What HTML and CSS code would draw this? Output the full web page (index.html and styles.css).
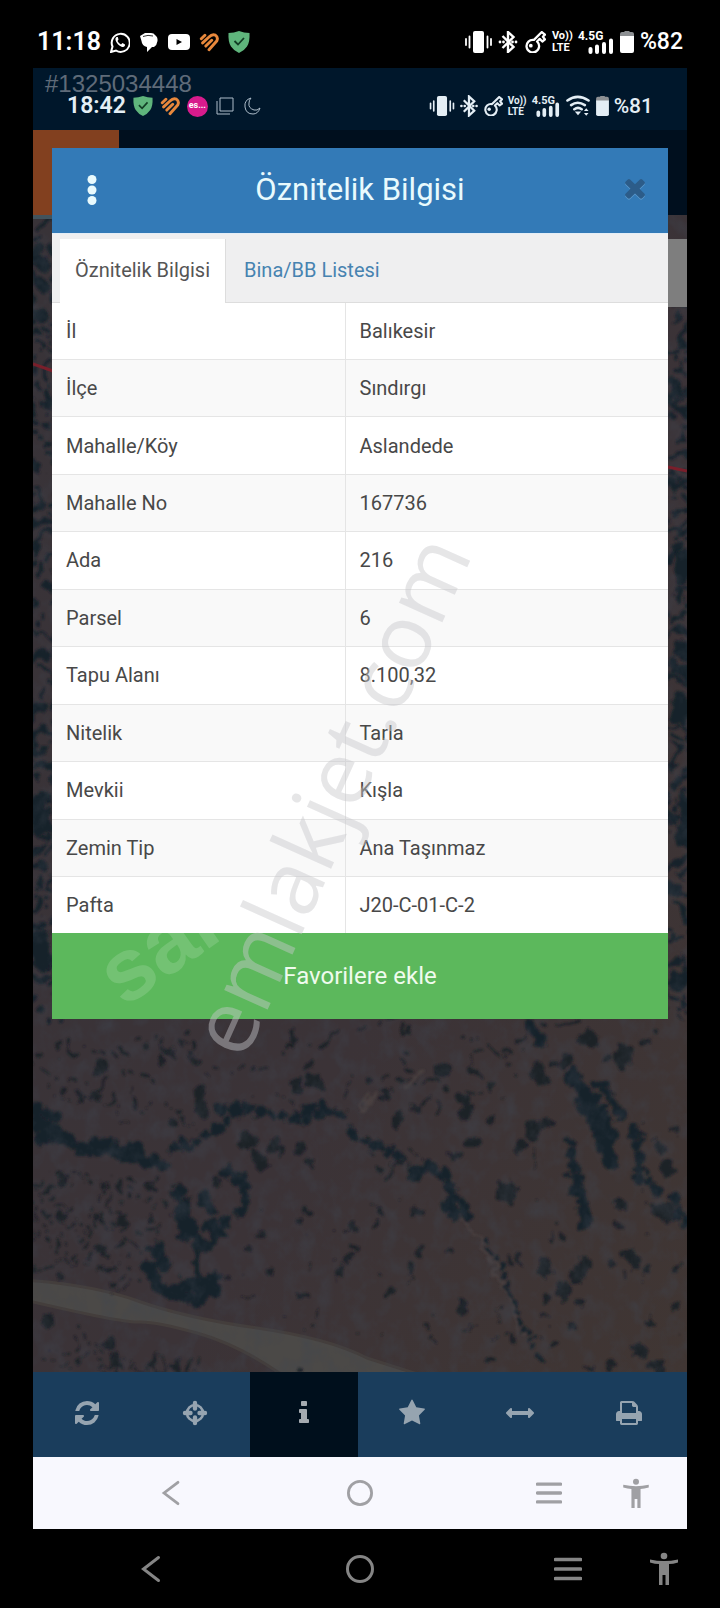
FILE: index.html
```html
<!DOCTYPE html>
<html lang="tr">
<head>
<meta charset="utf-8">
<meta name="viewport" content="width=device-width, initial-scale=1">
<title>Öznitelik Bilgisi</title>
<link rel="stylesheet" href="styles.css">
</head>
<body>
<svg class="defs" aria-hidden="true">
  <symbol id="shield" viewBox="0 0 22 22"><path fill="#5fb57c" d="M11 0 Q16 2 21.500 2 Q22 11 19 15.500 Q16 20 11 22 Q6 20 3 15.500 Q0 11 .5 2 Q6 2 11 0z"/><path d="m6.500 10 3.500 3.500 6-6.500" fill="none" stroke="#123d25" stroke-width="1.800"/></symbol>
  <symbol id="heart" viewBox="0 0 22 22"><path d="M2.500 7.500 6.500 3.500M4 12 11 5.500Q14.500 2 18 3.500 21.500 6 19.500 10L11 19.500M7.500 15.500 14 9" fill="none" stroke="#e8883c" stroke-width="3.200" stroke-linecap="round" stroke-linejoin="round"/></symbol>
  <symbol id="vibrate" viewBox="0 0 27 24"><rect x="8" y="1" width="11" height="22" rx="2"/><path d="M1 9v6M4.500 6.500v11M22.500 6.500v11M26 9v6" fill="none" stroke="currentColor" stroke-width="1.800" stroke-linecap="round"/></symbol>
  <symbol id="bluetooth" viewBox="0 1 19 22"><path d="m4 6 11 11-5.500 5V2L15 7 4 18" fill="none" stroke="currentColor" stroke-width="2.400"/><circle cx="1.500" cy="12" r="1.400"/><circle cx="5" cy="12" r="1.400"/><circle cx="14" cy="12" r="1.400"/><circle cx="17.500" cy="12" r="1.400"/></symbol>
  <symbol id="key" viewBox="1 2 21 21"><path d="M10.500 10.500 18 3l3 2.500-2 2 2 2.500-2.500 2-2.500-2.500-2.500 2.500a6 6 0 1 1-3-1.500z" fill="none" stroke="currentColor" stroke-width="2.200" stroke-linejoin="round"/><circle cx="7.500" cy="16" r="1.800"/></symbol>
  <symbol id="battery" viewBox="0 0 14 24"><path d="M2 2h2.500V1h5v1H12a2 2 0 0 1 2 2v3H0V4a2 2 0 0 1 2-2z" fill="#8d9093"/><path d="M0 6h14v15a2 2 0 0 1-2 2H2a2 2 0 0 1-2-2z"/></symbol>
  <symbol id="bars" viewBox="0 0 26 16"><path d="M2.500 11v3M9 8.500V14M16 6v8M23 2.500V14" fill="none" stroke="currentColor" stroke-width="4" stroke-linecap="round"/></symbol>
  <symbol id="back" viewBox="0 0 28 28"><path d="M21.500 2.500 6.500 14l15 11.500" fill="none" stroke="currentColor" stroke-width="3" stroke-linecap="round"/></symbol>
  <symbol id="home" viewBox="0 0 28 28"><circle cx="14" cy="14" r="12.500" fill="none" stroke="currentColor" stroke-width="3"/></symbol>
  <symbol id="menu" viewBox="0 0 28 28"><path d="M1.500 4.500h25M1.500 14h25M1.500 23.500h25" fill="none" stroke="currentColor" stroke-width="3.600" stroke-linecap="round"/></symbol>
  <symbol id="person" viewBox="0 0 28 34"><circle cx="14" cy="4" r="3.300"/><path d="M0 7.500Q14 10.500 28 7.500V10.500Q23 12 19 12V33h-3.500V23h-3V33H9V12Q5 12 0 10.500z"/></symbol>
</svg>

<div class="device">
  <header class="status status-outer">
    <div class="status-group">
      <time class="clock">11:18</time>
      <svg class="i20" viewBox="0 0 20 22" role="img" aria-label="WhatsApp"><path d="M1 21 2.500 15.500A9 9 0 1 1 6 19.500z" fill="none" stroke="currentColor" stroke-width="2"/><path d="M6.500 6Q5 7 5.500 9Q7 14 12 16Q14 16.500 15 14.500V13.500L12.500 12 11 13.500Q8.500 12 7.500 10L8.500 8.500 7.800 6z"/></svg>
      <svg class="i20" viewBox="0 0 20 22" role="img" aria-label="Mesajlar"><path d="M6 2h6q3 0 4 2 3 2 2.500 6T15 16h-2l-5 5v-5Q3 15 2.500 10L1 5z"/><path d="M4 5.500Q9 3.500 14 5" fill="none" stroke="#000" stroke-width=".8"/></svg>
      <svg class="i22" viewBox="0 0 22 22" role="img" aria-label="YouTube"><rect y="3" width="22" height="16" rx="4"/><path fill="#000" d="m8.500 8 5.500 3-5.500 3z"/></svg>
      <svg class="i20"><use href="#heart"/></svg>
      <svg class="i22"><use href="#shield"/></svg>
    </div>
    <div class="status-group status-right">
      <svg class="i27"><use href="#vibrate"/></svg>
      <svg class="i20"><use href="#bluetooth"/></svg>
      <svg class="i22"><use href="#key"/></svg>
      <span class="volte"><span>Vo))</span><span>LTE</span></span>
      <span class="signal"><span>4.5G</span><svg><use href="#bars"/></svg></span>
      <svg class="i14"><use href="#battery"/></svg>
      <span class="percent">%82</span>
    </div>
  </header>

  <main class="screen">
    <div class="status status-inner">
      <span class="listing">#1325034448</span>
      <div class="status-group">
        <time class="clock">18:42</time>
        <svg class="i20"><use href="#shield"/></svg>
        <svg class="i20"><use href="#heart"/></svg>
        <span class="pink">es...</span>
        <svg class="i20 thin" viewBox="0 0 20 20"><path d="M5 2h13v13H5zM2 5v13h13" /></svg>
        <svg class="i20 thin" viewBox="0 0 20 20"><path d="M9 2Q2 4 3 11t8 7q5 0 7-6-3 3-6 2-6-2-5-7 0-3 2-5z"/></svg>
      </div>
      <div class="status-group status-right">
        <svg class="i27"><use href="#vibrate"/></svg>
        <svg class="i18"><use href="#bluetooth"/></svg>
        <svg class="i20"><use href="#key"/></svg>
        <span class="volte"><span>Vo))</span><span>LTE</span></span>
        <span class="signal"><span>4.5G</span><svg><use href="#bars"/></svg></span>
        <svg class="i27" viewBox="0 0 27 24"><path d="M2 6Q13 -2 25 6M6 11q7-5 15 0M9.500 15.500q4-3 8 0" fill="none" stroke="currentColor" stroke-width="2.800" stroke-linecap="round"/><path d="m10 18h7l-3.500 4zM20 17.500l2.500-3 2.500 3zM20 19.500h5l-2.500 3z"/></svg>
        <svg class="i14"><use href="#battery"/></svg>
        <span class="percent">%81</span>
      </div>
    </div>

    <div class="app">
      <div class="appbar"><div class="brand"></div></div>
      <div class="map">
        <svg class="ground" viewBox="33 215 654 1157" preserveAspectRatio="xMidYMax slice" aria-hidden="true">
          <defs>
            <filter id="soil" x="0" y="0" width="100%" height="100%"><feTurbulence type="fractalNoise" baseFrequency=".06 .05" numOctaves="5" seed="4"/><feColorMatrix values="0 0 0 0 .05  0 0 0 0 .06  0 0 0 0 .08  1.600 1.200 0 0 -1.250"/></filter>
            <filter id="rough" x="-5%" y="-5%" width="110%" height="110%"><feTurbulence type="fractalNoise" baseFrequency=".07" numOctaves="4" seed="8"/><feDisplacementMap in="SourceGraphic" scale="18" xChannelSelector="R" yChannelSelector="G"/><feGaussianBlur stdDeviation=".8"/></filter>
            <filter id="scatter" x="-5%" y="-5%" width="110%" height="110%"><feTurbulence type="fractalNoise" baseFrequency=".03" numOctaves="3" seed="21"/><feDisplacementMap in="SourceGraphic" scale="70" xChannelSelector="R" yChannelSelector="G"/><feGaussianBlur stdDeviation=".8"/></filter>
            <linearGradient id="earth" x1="0" y1="0" x2="1" y2="1"><stop offset="0" stop-color="#383338"/><stop offset=".6" stop-color="#3b3337"/><stop offset="1" stop-color="#403633"/></linearGradient>
          </defs>
          <rect x="33" y="215" width="654" height="1157" fill="url(#earth)"/>
          <path fill="#4b4947" stroke="#443e3c" stroke-width="3" d="M20 1280 Q90 1284 138 1301T257 1328T367 1358L427 1377H285Q240 1345 197 1333T138 1322 20 1299z"/>
          <g filter="url(#scatter)" fill="none" stroke="#1e2228" stroke-linecap="round">
            <path stroke-width="7" stroke-dasharray="0 19" d="M35 1040q40 20 90 5t80 20 110-20 90 15 100-10 180-20M40 1065q60 30 120 10M36 1175q50 20 90 10t50 20M36 1205q50 20 120 10M36 1245q50 20 110 0"/>
            <path stroke-width="5" stroke-dasharray="0 13" d="M38 1085q30 20 80 20t90 10M36 1185q50 20 130 8M36 1215q40 20 120 10M36 1235q50 10 120 15M36 1262q60 0 100 12M60 1345q50 10 120 30M50 1365q50 0 160 5M460 1040q60 10 100 25M350 1135q40 30 70 32"/>
            <path stroke-width="4" stroke-dasharray="0 37" d="M240 1290q90-70 180 10t150-10 100 60M280 1320q120 30 220 0M260 1210q100 40 150-20M480 1070q80 80 60 180M210 1090q90 40 240-20M620 1100q60 60 20 180"/>
            <path stroke="#16212b" stroke-width="14" stroke-dasharray="0 27" d="M42 226v780M680 320v700"/>
            <path stroke="#16212b" stroke-width="8" stroke-dasharray="0 19" d="M34 240v780M56 230v780M672 320v700M690 320v700"/>
          </g>
          <g filter="url(#rough)" fill="none" stroke-linecap="round" stroke-linejoin="round">
            <path stroke="#494140" stroke-width="3" d="M360 1112l15-18M403 1090l20-15M455 1215l25 25 20 40 22 50"/>
            <g stroke="#1b2028">
              <path stroke-width="20" d="M545 1267h0M506 1190v4M622 1056v4M661 1212h4M588 1040h0"/>
              <path stroke-width="14" d="M200 1092v6M203 1110h0M314 1082h5M296 1088h0M463 1096v4M464 1112h0M443 1070h0M471 1143h0M521 1148h0M546 1123h0M533 1128v6M537 1070l5 8M298 1149h0M276 1147h0M260 1158v4M243 1140l9 4M100 1068h3M631 1256v3M583 1263v6M575 1275h0M562 1290h0M638 1352h0M657 1365h0M463 1306h0M620 1205h0M670 1168h0M659 1148h0M399 1119h0M567 1060h0M109 1343h0M117 1362h0M48 1320h0"/>
              <path stroke-width="8" d="M390 1292v3M340 1270v4M647 1270h0M379 1210h0M416 1212h0M310 1211h0M654 1033h0M652 1325h0M620 1225h0M295 1030v8M66 1087h0M80 1095h0M95 1098h0M132 1105h0M172 1122h0M192 1058h0M172 1052h0M160 1062h0M310 1065h0M369 1077h0M385 1095h0M418 1106h0M425 1100h0M491 1118h0M312 1165h0M455 1158h0M509 1262h0M520 1257h0M548 1299h0M581 1303h0M354 1230h0M376 1225h0M299 1219h0M260 1235h0M249 1250h0M270 1272h0M352 1248h0M420 1250h0M301 1295h0M410 1267h0M350 1260h0M561 1237h0M610 1262h0M676 1270h0M674 1307h0M555 1345h0M490 1361h0M592 1368h0M609 1366h0M674 1130h0M570 1325h0M512 1340h0M60 1215h0M95 1218h0M123 1216v6M150 1220h0M100 1251h0M60 1276h0M110 1268h0M150 1190h0M105 1185h0M62 1180h0M216 1183h0M450 1250h0M645 1043h0M605 1060h0M555 1063h0M175 1365h0M300 1369h0"/>
            </g>
            <g stroke="#18212a">
              <path stroke-width="14" stroke-dasharray="0 11" d="M36 1112l30 6M36 1124l30 10M40 1138h25l12 10 42 4 32 10M95 1145l50 6M155 1158l15 12"/>
              <path stroke-width="11" stroke-dasharray="0 12" d="M175 1150l20-10 20-12 20-14 22-4 25 8 55-6 12 12M222 1108h30M310 1108h22M355 1135l15 8 15 8 18 6M375 1145l10-6"/>
              <path stroke-width="14" stroke-dasharray="0 13" d="M226 1172l18 12 4 14-10 18M204 1198l14 18M180 1196l6 22 8 18 14 12 14-20 4-14M178 1212l15 32M210 1225l8 8"/>
              <path stroke-width="6" d="M196 1240v34"/>
              <path stroke-width="15" stroke-dasharray="0 12" d="M157 1250l8 18M148 1266l14 24 28 10 30-14M180 1288l36-10"/>
              <path stroke-width="13" stroke-dasharray="0 12" d="M415 1172l12-8 18 12 8 20 12 14 4 18M448 1205l8 16"/>
              <path stroke-width="6" stroke-dasharray="0 10" d="M486 1240l8 14 8 18 6 20 12 20 8 24 12 24M508 1292l10 24M598 1085l20 32"/>
              <path stroke-width="9" d="M530 1025l12 22"/>
              <path stroke-width="17" stroke-dasharray="0 13" d="M572 1078l8 16 16 30 8 22 8 16M586 1092l18 30 8 28M598 1120l12 36"/>
              <path stroke-width="12" stroke-dasharray="0 12" d="M600 1084l20 32M634 1132l6 28-2 20M570 1142l4 24 0 18 6 16 4 30M578 1180l10 44M676 1200l12 32M650 1180l6 12"/>
              <path stroke-width="16" d="M38 800l4 30M40 935l3 30M684 555v20M680 700v20M684 800l4 40"/>
            </g>
          </g>
          <rect x="33" y="215" width="654" height="1157" filter="url(#soil)" opacity=".45"/>
          <path d="M33 364l20 7M668 467l19 4" stroke="#791f2b" stroke-width="3"/>
          <path d="M33 215h20v4H33z" fill="#42535c"/>
        </svg>
        <div class="map-control"></div>
      </div>
      <nav class="toolbar" aria-label="Harita araçları">
        <button class="tool" aria-label="Yenile"><svg viewBox="0 0 1792 1792"><path d="M1639 1056q0 5-1 7-64 268-268 434.500t-478 166.500q-146 0-282.500-55t-243.500-157l-129 129q-19 19-45 19t-45-19-19-45v-448q0-26 19-45t45-19h448q26 0 45 19t19 45-19 45l-137 137q71 66 161 102t187 36q134 0 250-65t186-179q11-17 53-117 8-23 30-23h192q13 0 22.500 9.500t9.500 22.500zm25-800v448q0 26-19 45t-45 19h-448q-26 0-45-19t-19-45 19-45l138-138q-148-137-349-137-134 0-250 65t-186 179q-11 17-53 117-8 23-30 23h-199q-13 0-22.500-9.500t-9.500-22.500v-7q65-268 270-434.500t480-166.500q146 0 284 55.500t245 156.500l130-129q19-19 45-19t45 19 19 45z"/></svg></button>
        <button class="tool" aria-label="Konum"><svg viewBox="0 0 28 28"><circle cx="14" cy="14" r="8" fill="none" stroke="currentColor" stroke-width="2.600"/><path d="M14 4v5.500M14 18.500V24M4 14h5.500M18.500 14H24" stroke="currentColor" stroke-width="4.400" stroke-linecap="round"/></svg></button>
        <button class="tool tool-active" aria-label="Bilgi" aria-pressed="true"><svg viewBox="0 0 1792 1792"><path d="M1216 1344v128q0 26-19 45t-45 19h-512q-26 0-45-19t-19-45v-128q0-26 19-45t45-19h64v-384h-64q-26 0-45-19t-19-45v-128q0-26 19-45t45-19h384q26 0 45 19t19 45v576h64q26 0 45 19t19 45zm-128-1152v192q0 26-19 45t-45 19h-256q-26 0-45-19t-19-45v-192q0-26 19-45t45-19h256q26 0 45 19t19 45z"/></svg></button>
        <button class="tool" aria-label="Favoriler"><svg viewBox="0 0 1792 1792"><path d="M1728 647q0 22-26 48l-363 354 86 500q1 7 1 20 0 21-10.500 35.500t-30.500 14.500q-19 0-40-12l-449-236-449 236q-22 12-40 12-21 0-31.500-14.500t-10.500-35.500q0-6 2-20l86-500-364-354q-25-27-25-48 0-37 56-46l502-73 225-455q19-41 49-41t49 41l225 455 502 73q56 9 56 46z"/></svg></button>
        <button class="tool" aria-label="Ölçüm"><svg viewBox="0 0 1792 1792"><path d="M1792 896q0 26-19 45l-256 256q-19 19-45 19t-45-19-19-45v-128h-1024v128q0 26-19 45t-45 19-45-19l-256-256q-19-19-19-45t19-45l256-256q19-19 45-19t45 19 19 45v128h1024v-128q0-26 19-45t45-19 45 19l256 256q19 19 19 45z"/></svg></button>
        <button class="tool" aria-label="Yazdır"><svg viewBox="0 0 1792 1792"><path fill-rule="evenodd" d="M448 1536h896v-256h-896v256zm0-640h896v-384h-160q-40 0-68-28t-28-68v-160h-640v640zm1280 64v416q0 13-9.500 22.500t-22.500 9.500h-224v160q0 40-28 68t-68 28h-960q-40 0-68-28t-28-68v-160h-224q-13 0-22.500-9.500t-9.500-22.500v-416q0-79 56.500-135.500t135.500-56.500h64v-544q0-40 28-68t68-28h672q40 0 88 20t76 48l152 152q28 28 48 76t20 88v256h64q79 0 135.500 56.500t56.500 135.500z"/></svg></button>
      </nav>

      <section class="modal" role="dialog" aria-labelledby="modal-title">
        <div class="modal-head">
          <button class="head-btn" aria-label="Menü"><svg class="dots" viewBox="0 0 10 30"><circle cx="5" cy="4.500" r="4.500"/><circle cx="5" cy="15" r="4.500"/><circle cx="5" cy="25.500" r="4.500"/></svg></button>
          <h1 class="modal-title" id="modal-title">Öznitelik Bilgisi</h1>
          <button class="head-btn close" aria-label="Kapat"><svg viewBox="0 0 1792 1792"><path d="M1490 1190q0 40-28 68l-136 136q-28 28-68 28t-68-28l-294-294-294 294q-28 28-68 28t-68-28l-136-136q-28-28-28-68t28-68l294-294-294-294q-28-28-28-68t28-68l136-136q28-28 68-28t68 28l294 294 294-294q28-28 68-28t68 28l136 136q28 28 28 68t-28 68l-294 294 294 294q28 28 28 68z"/></svg></button>
        </div>
        <div class="tabs" role="tablist">
          <button class="tab tab-active" role="tab" aria-selected="true">Öznitelik Bilgisi</button>
          <button class="tab" role="tab" aria-selected="false">Bina/BB Listesi</button>
        </div>
        <table class="info">
          <tbody>
            <tr><th scope="row">İl</th><td>Balıkesir</td></tr>
            <tr><th scope="row">İlçe</th><td>Sındırgı</td></tr>
            <tr><th scope="row">Mahalle/Köy</th><td>Aslandede</td></tr>
            <tr><th scope="row">Mahalle No</th><td>167736</td></tr>
            <tr><th scope="row">Ada</th><td>216</td></tr>
            <tr><th scope="row">Parsel</th><td>6</td></tr>
            <tr><th scope="row">Tapu Alanı</th><td>8.100,32</td></tr>
            <tr><th scope="row">Nitelik</th><td>Tarla</td></tr>
            <tr><th scope="row">Mevkii</th><td>Kışla</td></tr>
            <tr><th scope="row">Zemin Tip</th><td>Ana Taşınmaz</td></tr>
            <tr><th scope="row">Pafta</th><td>J20-C-01-C-2</td></tr>
          </tbody>
        </table>
        <button class="favorite">Favorilere ekle</button>
      </section>
      <svg class="watermark" viewBox="33 130 654 1327" preserveAspectRatio="xMidYMin meet">
        <text class="mark-small" transform="translate(124 1008) rotate(-35)">sah</text>
        <text class="mark-large" transform="translate(244 1062) rotate(-65.700)">emlakjet.com</text>
      </svg>
    </div>

    <nav class="sysnav sysnav-light" aria-label="Uygulama gezinme">
      <button aria-label="Geri"><svg><use href="#back"/></svg></button>
      <button aria-label="Ana ekran"><svg><use href="#home"/></svg></button>
      <button aria-label="Son uygulamalar"><svg><use href="#menu"/></svg></button>
      <button aria-label="Erişilebilirlik"><svg class="tall"><use href="#person"/></svg></button>
    </nav>
  </main>

  <nav class="sysnav sysnav-dark" aria-label="Sistem gezinme">
    <button aria-label="Geri"><svg><use href="#back"/></svg></button>
    <button aria-label="Ana ekran"><svg><use href="#home"/></svg></button>
    <button aria-label="Son uygulamalar"><svg><use href="#menu"/></svg></button>
    <button aria-label="Erişilebilirlik"><svg class="tall"><use href="#person"/></svg></button>
  </nav>
</div>
</body>
</html>
```
FILE: styles.css
```css
* { box-sizing: border-box; }
body { margin: 0; background: #000; font-family: Roboto, "Noto Sans", sans-serif; }
button { border: 0; padding: 0; background: none; color: inherit; font: inherit; cursor: pointer; }
svg { fill: currentColor; display: block; flex: none; }
.defs { position: absolute; width: 0; height: 0; }

.device { min-height: 100vh; display: flex; flex-direction: column; }

/* Status bars */
.status { display: flex; justify-content: space-between; color: #fff; }
.status-outer { height: 68px; padding: 16px 37px 0; }
.status-inner { position: relative; height: 62px; padding: 14px 34px 0; background: #00172b; color: #e4eef5; }
.status-group { display: flex; align-items: center; gap: 9px; }
.status-right { gap: 6px; }
.status-inner .status-group { gap: 7px; }
.status-inner .status-right { gap: 5px; }
.clock { font-size: 25px; font-weight: 600; line-height: 28px; }
.percent { font-size: 23px; font-weight: 500; line-height: 28px; }
.status-inner .clock { font-size: 23px; }
.status-inner .percent { font-size: 21px; }
.i14 { width: 14px; height: 24px; }
.i18 { width: 18px; height: 22px; }
.i20 { width: 20px; height: 22px; }
.i22 { width: 22px; height: 22px; }
.i27 { width: 27px; height: 24px; }
.status-inner .i20 { height: 20px; }
.status-inner .i27 { width: 26px; height: 22px; }
.status-inner .i14 { width: 13px; height: 22px; }
.thin { fill: none; stroke: #aebdca; stroke-width: 1; }
.volte { display: grid; font-size: 11px; font-weight: 700; line-height: 12px; width: 20px; }
.signal { display: grid; width: 36px; font-size: 12px; font-weight: 700; line-height: 10px; }
.signal svg { width: 26px; height: 16px; margin: -3px 0 0 10px; }
.status-inner .volte { width: 19px; font-size: 10px; line-height: 11px; }
.status-inner .signal { width: 28px; font-size: 11px; line-height: 9px; }
.status-inner .signal svg { width: 24px; height: 15px; margin-left: 4px; }
.pink { width: 21px; height: 21px; border-radius: 50%; background: #d81b8c; color: #fff; font-size: 9px; font-weight: 700; line-height: 19px; text-align: center; }
.listing { position: absolute; left: 12px; top: 2px; font: 24px/28px "Liberation Sans", sans-serif; color: #5f6b79; }

/* App */
.screen { flex: 1; display: flex; flex-direction: column; margin: 0 33px; }
.app { position: relative; flex: 1; display: flex; flex-direction: column; }
.appbar { height: 85px; background: #000f1e; }
.brand { width: 86px; height: 100%; background: #82401f; }
.map { position: relative; flex: 1; overflow: hidden; background: #3b3335; }
.ground { position: absolute; inset: 0; width: 100%; height: 100%; }
.map-control { position: absolute; right: 0; top: 24px; width: 60px; height: 68px; background: #7e7e7e; }
.toolbar { display: grid; grid-template-columns: repeat(6, 1fr); height: 85px; padding-right: 4px; background: #1a3d5c; color: #96a4b0; }
.tool { display: grid; place-items: center; padding-bottom: 4px; }
.tool svg { width: 28px; height: 28px; }
.tool-active { background: #000f1c; color: #a5abb0; }

/* Attribute dialog */
.modal { position: absolute; left: 19px; right: 19px; top: 18px; display: flex; flex-direction: column; background: #fff; color: #484848; font-size: 20px; line-height: 24px; }
.modal-head { display: flex; align-items: center; justify-content: space-between; height: 85px; padding: 0 17px 2px 24px; background: #337ab7; color: #e9fafd; }
.modal-title { flex: 1; margin: 0; padding-right: 7px; font-size: 31px; font-weight: 400; line-height: 36px; text-align: center; }
.head-btn { display: grid; place-items: center; width: 32px; height: 40px; }
.dots { width: 10px; height: 30px; }
.close { color: #2c5c89; }
.close svg { width: 30px; height: 30px; filter: drop-shadow(0 1px 0 #5c99cc); }
.tabs { display: flex; height: 70px; padding: 5px 8px 0; background: #efeff0; border-top: 1px solid #e3edf6; border-bottom: 1px solid #ddd; }
.tab { padding: 0 18px 2px; color: #4783b0; }
.tab-active { margin-bottom: -1px; padding: 0 15px 2px; background: #fff; border-right: 1px solid #ddd; color: #555; }
.info { width: 100%; height: 630px; border-collapse: collapse; }
.info th, .info td { padding: 0 14px; text-align: left; font-weight: 400; border-bottom: 1px solid #e5e5e5; }
.info th { width: 293px; border-right: 1px solid #e5e5e5; }
.info tr:nth-child(even) { background: #f9f9f9; }
.info tr:last-child > * { border-bottom: 0; }
.favorite { height: 86px; background: #5cb85c; color: #effbee; font-size: 24px; }

.watermark { position: absolute; inset: 0; width: 100%; height: 100%; pointer-events: none; }
.mark-large { font: 89px "Open Sans", sans-serif; fill: #c8c8cc; opacity: .45; }
.mark-small { font: bold 88px "Liberation Sans", sans-serif; fill: #fff; opacity: .14; }

/* Navigation bars */
.sysnav { display: grid; align-items: center; }
.sysnav button:nth-child(1) { grid-column: 2; }
.sysnav button:nth-child(2) { grid-column: 4; }
.sysnav button:nth-child(3) { grid-column: 6; }
.sysnav button:nth-child(4) { grid-column: 8; }
.sysnav button { grid-row: 1; }
.sysnav svg { width: 100%; height: 28px; }
.sysnav .tall { height: 34px; }
.sysnav-light { height: 72px; background: #f8f8fe; color: #a0a0a4; grid-template-columns: 125fr 26px 163fr 26px 163fr 26px 61fr 26px 38fr; }
.sysnav-light svg { height: 26px; }
.sysnav-light .tall { height: 31px; }
.sysnav-dark { height: 79px; color: #858585; grid-template-columns: 137fr 28px 181fr 28px 180fr 28px 68fr 28px 42fr; }
```
